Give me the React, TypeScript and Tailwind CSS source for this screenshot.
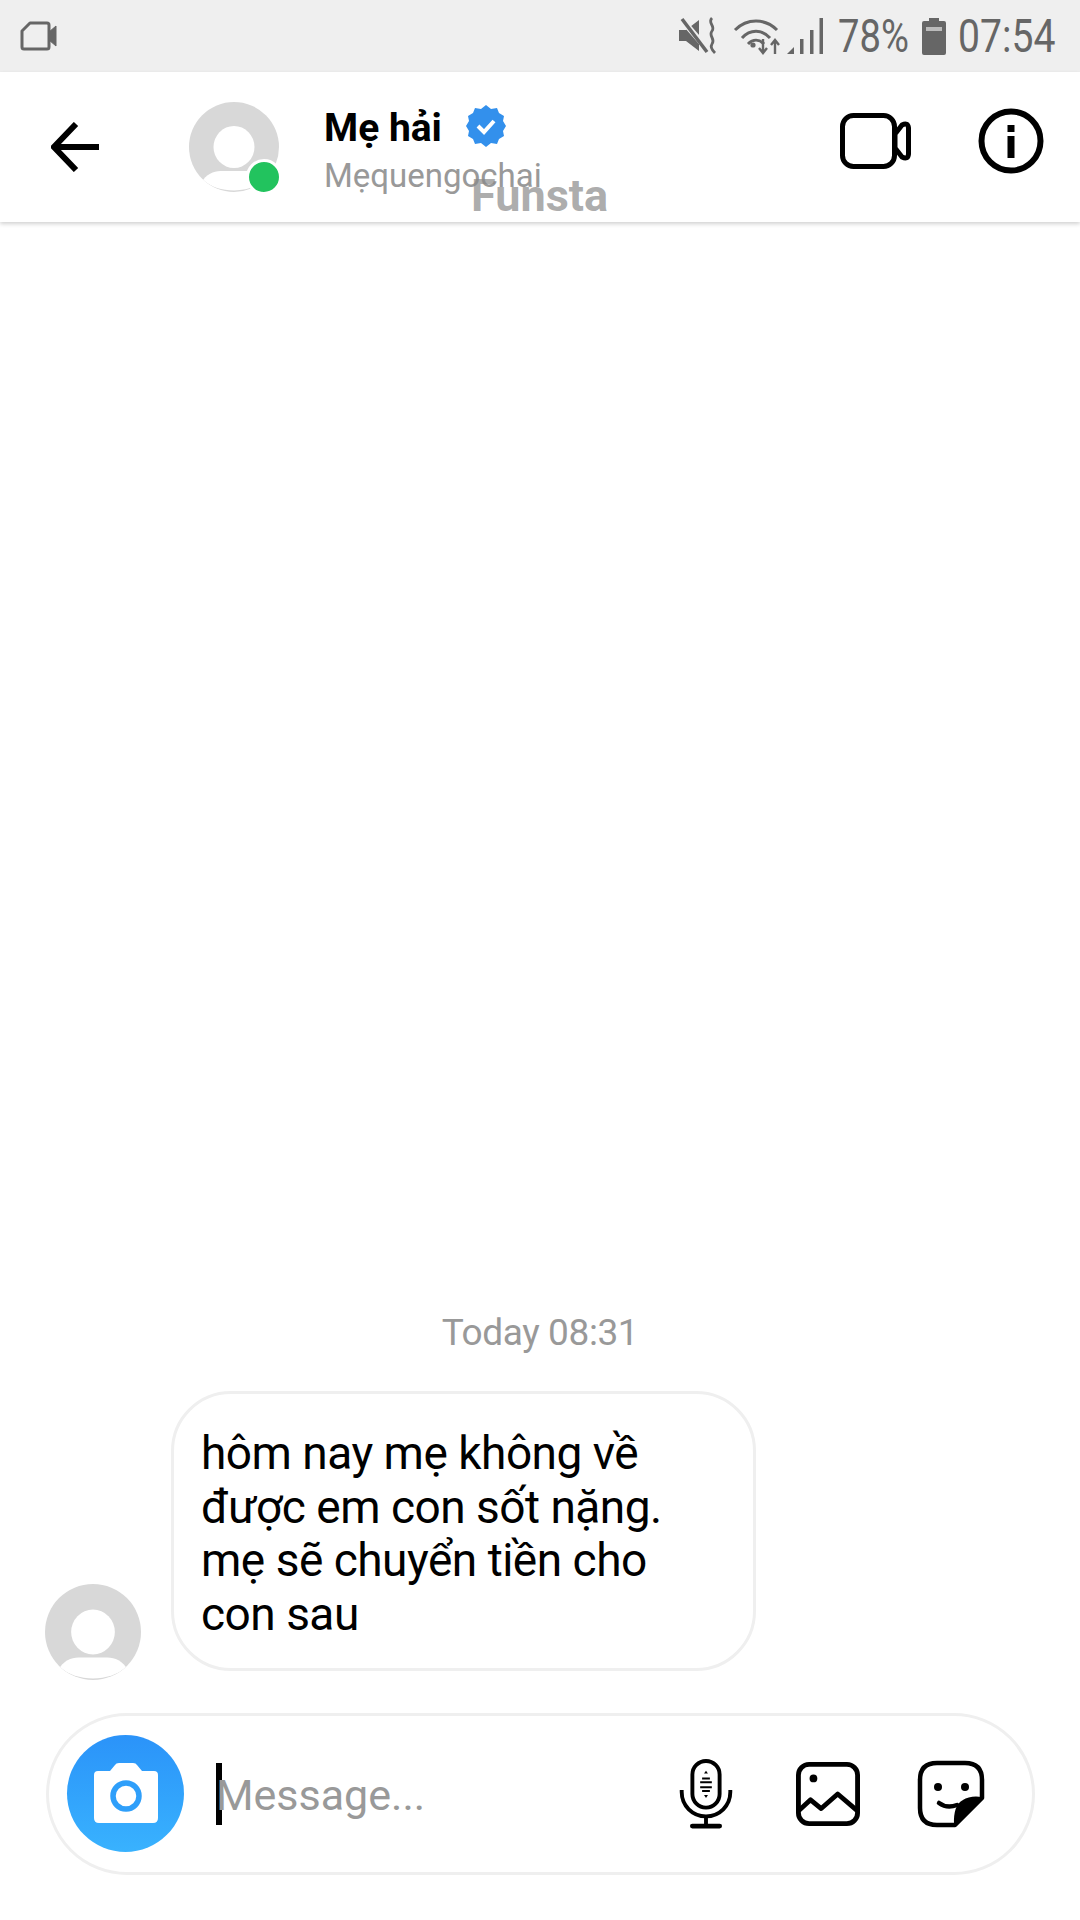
import React from "react";

const Avatar = ({ size }: { size: number }) => (
  <svg width={size} height={size} viewBox="0 0 90 90" className="block">
    <defs>
      <clipPath id={`av${size}`}><circle cx="45" cy="45" r="45" /></clipPath>
    </defs>
    <circle cx="45" cy="45" r="45" fill="#d8d8d8" />
    <g clipPath={`url(#av${size})`}>
      <ellipse cx="45" cy="45" rx="20.5" ry="21" fill="#fff" />
      <path d="M14 78 C20 70 27 69 34 69 H56 C63 69 70 70 76 78 C68 85 57 88.5 45 88.5 C33 88.5 22 85 14 78Z" fill="#fff" />
    </g>
  </svg>
);

const StatusCam = () => (
  <svg width="38" height="30" viewBox="0 0 38 30" fill="none">
    <path d="M10 2H27Q29 2 29 4V26Q29 28 27 28H4Q2 28 2 26V10Z" stroke="#666" strokeWidth="3" strokeLinejoin="round" />
    <path d="M29 11L36 5V25L29 19Z" fill="#666" stroke="#666" strokeWidth="1" />
  </svg>
);

const MuteIcon = () => (
  <svg width="38" height="38" viewBox="0 0 38 38" fill="none">
    <path d="M0 13H7L20 3V34L7 24H0Z" fill="#666" />
    <path d="M3 3L30 34" stroke="#efefef" strokeWidth="6" />
    <path d="M3 2L28 35" stroke="#666" strokeWidth="3.5" />
    <path d="M33 1C28 6 37 9 33 14C29 19 37 22 33 27C31 30 33 33 36 36" stroke="#666" strokeWidth="2.8" />
  </svg>
);

const WifiIcon = () => (
  <svg width="50" height="38" viewBox="0 0 50 38" fill="none">
    <path d="M2 13C14 1 32 1 44 13" stroke="#666" strokeWidth="3" />
    <path d="M9 21C17 12 29 12 37 21" stroke="#666" strokeWidth="3" />
    <path d="M15 27C20 22 26 22 31 27" stroke="#666" strokeWidth="3" />
    <circle cx="20" cy="28" r="2.6" fill="#666" />
    <path d="M30 22V35M26 31L30 36L34 31" stroke="#666" strokeWidth="2.4" />
    <path d="M42 37V24M38 28L42 23L46 28" stroke="#666" strokeWidth="2.4" />
  </svg>
);

const SignalIcon = () => (
  <svg width="36" height="38" viewBox="0 0 36 38">
    <path d="M0 37L7 30V37Z" fill="#666" />
    <rect x="13" y="22" width="3.5" height="15" fill="#666" />
    <rect x="23" y="13" width="3.5" height="24" fill="#666" />
    <rect x="32.5" y="1" width="3.5" height="36" fill="#666" />
  </svg>
);

const BatteryIcon = () => (
  <svg width="24" height="37" viewBox="0 0 24 37">
    <path d="M7 0H17V3H22Q24 3 24 5V35Q24 37 22 37H2Q0 37 0 35V5Q0 3 2 3H7Z" fill="#666" />
    <rect x="4" y="9" width="16" height="4" fill="#bbb" />
  </svg>
);

const Verified = () => (
  <svg width="40" height="42" viewBox="0 0 40 42">
    <path
      d="M20 0L25 4L31 3L33 8L38 11L37 16L40 21L37 26L38 31L33 34L31 39L25 38L20 42L15 38L9 39L7 34L2 31L3 26L0 21L3 16L2 11L7 8L9 3L15 4Z"
      fill="#3390ec"
    />
    <path d="M12 21L18 27L28 16" fill="none" stroke="#fff" strokeWidth="4" />
  </svg>
);

const BackArrow = () => (
  <svg width="48" height="50" viewBox="0 0 48 50" fill="none">
    <path d="M48 25H4M25 2L3 25L25 48" stroke="#000" strokeWidth="6" />
  </svg>
);

const VideoIcon = () => (
  <svg width="71" height="56" viewBox="0 0 71 56" fill="none">
    <rect x="2.5" y="2.5" width="52" height="51" rx="11" stroke="#000" strokeWidth="5" />
    <path d="M55 21L62 12Q68 9 68.5 15V41Q68 47 62 44L55 35Z" stroke="#000" strokeWidth="5" strokeLinejoin="round" />
  </svg>
);

const InfoIcon = () => (
  <svg width="66" height="66" viewBox="0 0 66 66" fill="none">
    <circle cx="33" cy="33" r="29.5" stroke="#000" strokeWidth="6" />
    <rect x="29.5" y="17" width="7" height="7" fill="#000" />
    <rect x="29.5" y="28" width="7" height="22" fill="#000" />
  </svg>
);

const CameraIcon = () => (
  <svg width="64" height="60" viewBox="0 0 64 60">
    <path
      d="M4 8H16L21 2Q22 0 25 0H39Q42 0 43 2L48 8H60Q64 8 64 12V55Q64 60 59 60H5Q0 60 0 55V12Q0 8 4 8Z"
      fill="#fff"
    />
    <circle cx="32" cy="33" r="13" fill="none" stroke="#2f9ffa" strokeWidth="5.5" />
  </svg>
);

const MicIcon = () => (
  <svg width="54" height="70" viewBox="0 0 54 72" fill="none">
    <rect x="13" y="2" width="28" height="48" rx="14" stroke="#000" strokeWidth="4" />
    <path d="M2 32V34C2 48 13 59 27 59C41 59 52 48 52 34V32" stroke="#000" strokeWidth="4" />
    <path d="M27 59V68" stroke="#000" strokeWidth="4" />
    <path d="M13 69H41" stroke="#000" strokeWidth="5" strokeLinecap="round" />
    <path d="M25 15H29L27 12Z" fill="#000" />
    <path d="M23 20H31M21 24H33M21 29H33M23 33H31" stroke="#000" strokeWidth="2" />
    <path d="M25 37H29L27 40Z" fill="#000" />
  </svg>
);

const GalleryIcon = () => (
  <svg width="64" height="64" viewBox="0 0 66 66" fill="none">
    <rect x="2.5" y="2.5" width="61" height="61" rx="11" stroke="#000" strokeWidth="5" />
    <circle cx="18" cy="17" r="4" fill="#000" />
    <path d="M3 50L15 39L26 48L43 33L64 51" stroke="#000" strokeWidth="5" strokeLinejoin="round" />
  </svg>
);

const StickerIcon = () => (
  <svg width="68" height="68" viewBox="0 0 68 68" fill="none">
    <path
      d="M38 65H20Q3 65 3 48V20Q3 3 20 3H48Q65 3 65 20V38Z"
      stroke="#000"
      strokeWidth="4.5"
      strokeLinejoin="round"
    />
    <path d="M38 65Q37 46 46 41Q54 36 65 38Z" fill="#000" stroke="#000" strokeWidth="2" strokeLinejoin="round" />
    <circle cx="21" cy="27" r="4" fill="#000" />
    <circle cx="48" cy="27" r="4" fill="#000" />
    <path d="M22 43Q30 49 40 45" stroke="#000" strokeWidth="4.5" strokeLinecap="round" />
  </svg>
);

export default function App() {
  return (
    <div className="relative flex h-[1920px] w-[1080px] flex-col overflow-hidden bg-white font-['Roboto',sans-serif]">
      <div className="flex h-[72px] shrink-0 items-center justify-between bg-[#efefef] pl-[20px] pr-[25px]">
        <StatusCam />
        <div className="flex items-center text-[46px] leading-none text-[#666]">
          <MuteIcon />
          <div className="ml-[16px]"><WifiIcon /></div>
          <div className="ml-[4px]"><SignalIcon /></div>
          <span className="ml-[15px] w-[71px] origin-left scale-x-[0.83] whitespace-nowrap">78%</span>
          <div className="ml-[13px]"><BatteryIcon /></div>
          <span className="ml-[12px] w-[97px] origin-left scale-x-[0.85] whitespace-nowrap">07:54</span>
        </div>
      </div>

      <header className="relative z-10 flex h-[150px] shrink-0 items-center bg-white pl-[51px] pr-[36px] shadow-[0_2px_4px_rgba(0,0,0,0.18)]">
        <BackArrow />
        <div className="relative ml-[90px] h-[90px] w-[90px]">
          <Avatar size={90} />
          <div className="absolute bottom-[-3px] right-[-3px] h-[36px] w-[36px] rounded-full border-[3px] border-white bg-[#22c35e]" />
        </div>
        <div className="ml-[45px] flex flex-col pt-[8px]">
          <div className="flex items-center text-[39px] font-bold leading-[44px] text-black">
            Mẹ hải
            <div className="ml-[24px] -mt-[4px]"><Verified /></div>
          </div>
          <div className="mt-[6px] text-[33px] leading-[40px] text-[#999]">Mẹquengochai</div>
        </div>
        <div className="mb-[13px] ml-auto flex items-center">
          <VideoIcon />
          <div className="ml-[67px]"><InfoIcon /></div>
        </div>
        <div className="absolute left-[471px] top-[100px] text-[45px] font-bold leading-[48px] text-[#888]/70">Funsta</div>
      </header>

      <main className="flex flex-1 flex-col justify-end">
        <div className="text-center text-[37px] leading-[40px] tracking-[-0.4px] text-[#999]">Today 08:31</div>
        <div className="mt-[38px] flex items-end pl-[45px]">
          <div className="mb-[-9px]"><Avatar size={96} /></div>
          <div className="ml-[30px] w-[585px] rounded-[60px] border-[3px] border-[#efefef] px-[27px] pb-[27px] pt-[33px] text-[46px] leading-[53.5px] tracking-[-0.5px] text-black">
            hôm nay mẹ không về
            <br />
            được em con sốt nặng.
            <br />
            mẹ sẽ chuyển tiền cho
            <br />
            con sau
          </div>
        </div>
        <div className="mb-[45px] ml-[46px] mt-[42px] flex h-[162px] w-[989px] items-center rounded-[81px] border-[3px] border-[#efefef] pl-[18px] pr-[47px]">
          <div className="mb-[2px] flex h-[117px] w-[117px] items-center justify-center rounded-full bg-gradient-to-b from-[#2b93f9] to-[#39b2fe]">
            <CameraIcon />
          </div>
          <div className="ml-[32px] h-[62px] w-[6px] bg-black" />
          <span className="-ml-[6px] mt-[3px] text-[43px] leading-none text-[#999]">Message...</span>
          <div className="ml-auto flex items-center">
            <MicIcon />
            <div className="ml-[63px]"><GalleryIcon /></div>
            <div className="ml-[57px]"><StickerIcon /></div>
          </div>
        </div>
      </main>
    </div>
  );
}
